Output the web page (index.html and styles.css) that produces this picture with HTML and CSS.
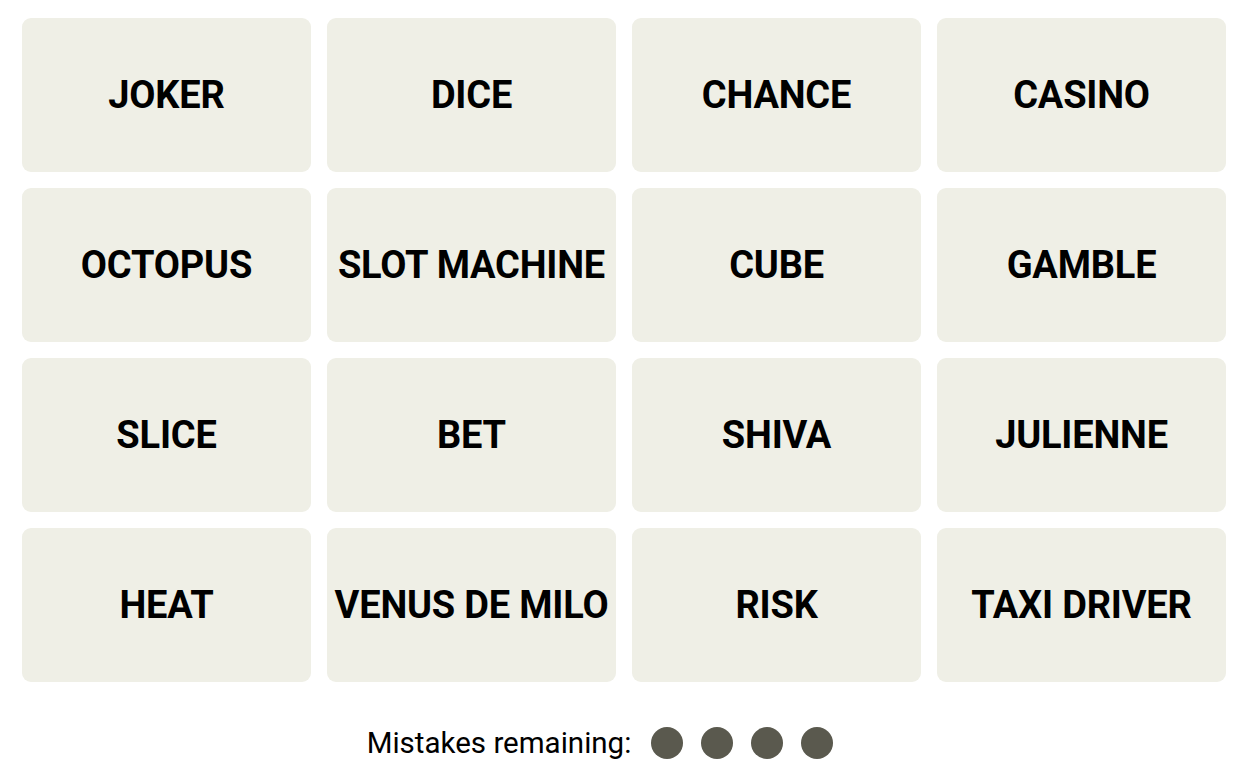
FILE: index.html
```html
<!DOCTYPE html>
<html lang="en">
<head>
  <meta charset="UTF-8">
  <title>Connections</title>
  <link rel="stylesheet" href="styles.css">
</head>
<body>
  <div class="board">
    <div class="tile">JOKER</div>
    <div class="tile">DICE</div>
    <div class="tile">CHANCE</div>
    <div class="tile">CASINO</div>

    <div class="tile">OCTOPUS</div>
    <div class="tile">SLOT MACHINE</div>
    <div class="tile">CUBE</div>
    <div class="tile">GAMBLE</div>

    <div class="tile">SLICE</div>
    <div class="tile">BET</div>
    <div class="tile">SHIVA</div>
    <div class="tile">JULIENNE</div>

    <div class="tile">HEAT</div>
    <div class="tile">VENUS DE MILO</div>
    <div class="tile">RISK</div>
    <div class="tile">TAXI DRIVER</div>
  </div>

  <div class="mistakes">
    <span class="mistakes-label">Mistakes remaining:</span>
    <div class="dots">
      <span class="dot"></span>
      <span class="dot"></span>
      <span class="dot"></span>
      <span class="dot"></span>
    </div>
  </div>
</body>
</html>
```

FILE: styles.css
```css
* {
  box-sizing: border-box;
}

body {
  margin: 0;
  background: #fff;
  font-family: Roboto, 'Liberation Sans', sans-serif;
  color: #000;
}

.board {
  display: grid;
  grid-template-columns: repeat(4, 289px);
  grid-auto-rows: 154px;
  gap: 16px;
  padding: 18px 0 0 22px;
}

.tile {
  display: flex;
  align-items: center;
  justify-content: center;
  background-color: #efefe6;
  border-radius: 9px;
  font-size: 38px;
  font-weight: 700;
  white-space: nowrap;
  letter-spacing: -0.2px;
}

.mistakes {
  display: flex;
  align-items: center;
  justify-content: center;
  gap: 20px;
  margin-top: 45px;
  padding-right: 50px;
  height: 32px;
}

.mistakes-label {
  font-size: 29.5px;
  font-weight: 400;
}

.dots {
  display: flex;
  gap: 18px;
}

.dot {
  width: 32px;
  height: 32px;
  border-radius: 50%;
  background-color: #5a594e;
}
```
